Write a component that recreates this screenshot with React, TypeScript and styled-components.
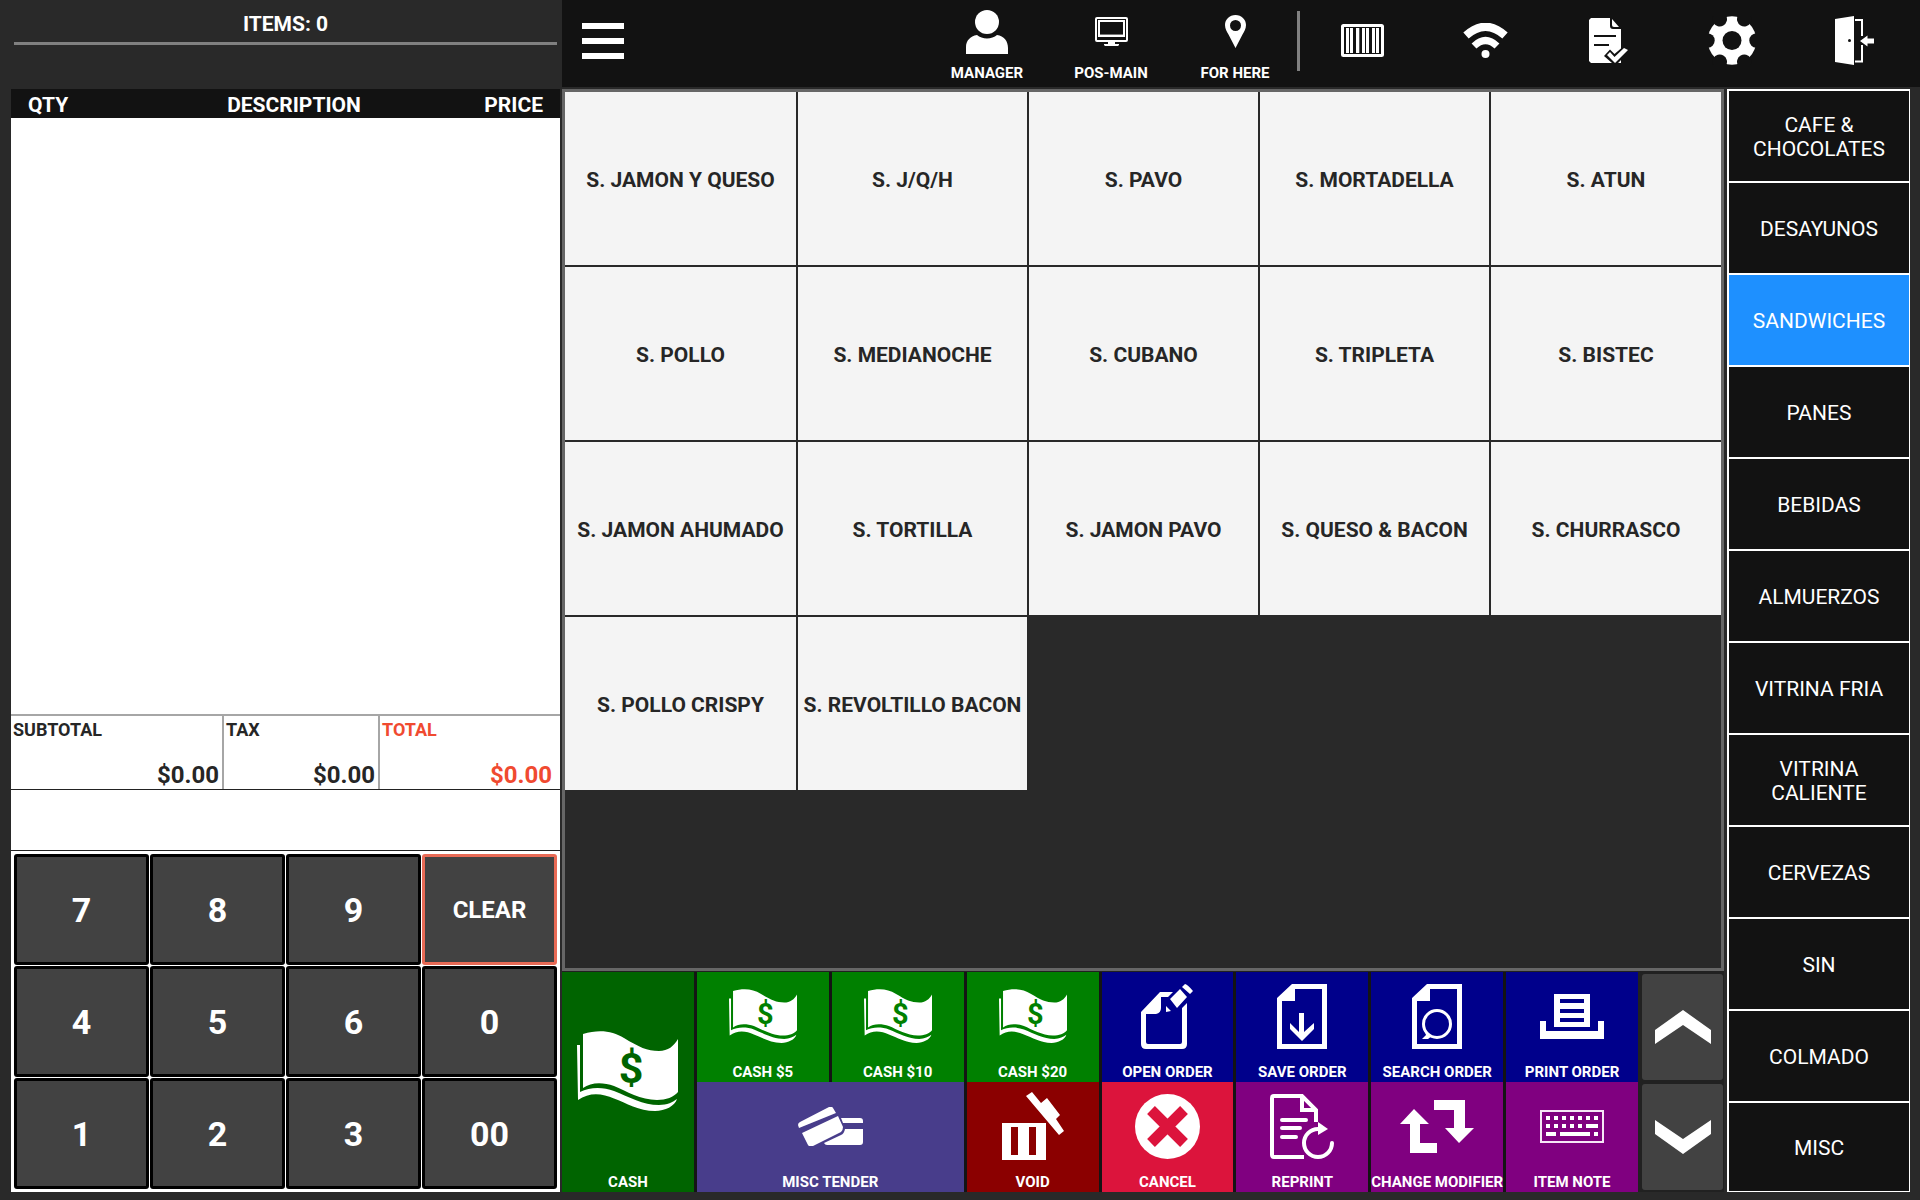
import React from "react";
import styled, { createGlobalStyle } from "styled-components";

const GlobalStyle = createGlobalStyle`
  *, *::before, *::after { box-sizing: border-box; }
  html, body { margin: 0; padding: 0; background: #292929; }
  body, button { font-family: Roboto, "Liberation Sans", sans-serif; }
  button { margin: 0; padding: 0; border: 0; color: inherit; cursor: pointer; }
  svg { display: block; flex: none; }
`;

const Screen = styled.div`
  display: grid;
  grid-template-columns: minmax(0, 562fr) minmax(0, 1358fr);
  min-height: 100vh;
  background: #292929;
  color: #fff;
`;

/* ---------- order panel ---------- */

const OrderPanel = styled.aside`
  display: flex;
  flex-direction: column;
  padding: 0 2px 8px 11px;
`;

const OrderHeader = styled.header`
  height: 89px;
  padding: 0 3px;
`;

const ItemCount = styled.h1`
  margin: 0;
  padding-top: 6px;
  height: 45px;
  border-bottom: 3px solid #808080;
  font-size: 21px;
  line-height: 36px;
  font-weight: 700;
  text-align: center;
`;

const Receipt = styled.section`
  flex: 1;
  display: flex;
  flex-direction: column;
  background: #fff;
  color: #262626;
`;

const ReceiptBody = styled.div`
  flex: 1;
`;

const ReceiptTable = styled.table`
  width: 100%;
  table-layout: fixed;
  border-collapse: collapse;
  background: #121212;
  color: #fff;
`;

const HeadCell = styled.th<{ $align: string; $width?: string }>`
  width: ${(p) => p.$width ?? "auto"};
  height: 29px;
  padding: 3px 17px 0;
  font-size: 21px;
  line-height: 26px;
  font-weight: 700;
  text-align: ${(p) => p.$align};
`;

const Totals = styled.dl`
  display: grid;
  grid-template-columns: 213fr 156fr 180fr;
  margin: 0;
  border-top: 2px solid #a6a6a6;
`;

const TotalBox = styled.div<{ $grand?: boolean }>`
  display: flex;
  flex-direction: column;
  justify-content: space-between;
  height: 73px;
  padding: 2px ${(p) => (p.$grand ? 8 : 3)}px 0 2px;
  border-right: ${(p) => (p.$grand ? "0" : "2px solid #a6a6a6")};
  color: ${(p) => (p.$grand ? "#f04a30" : "inherit")};
`;

const TotalLabel = styled.dt`
  font-size: 18px;
  line-height: 24px;
  font-weight: 700;
`;

const TotalValue = styled.dd`
  margin: 0;
  font-size: 24px;
  line-height: 28px;
  font-weight: 700;
  text-align: right;
`;

const Entry = styled.output`
  display: block;
  height: 62px;
  border-top: 1px solid #222;
  border-bottom: 1px solid #222;
`;

const Keypad = styled.div`
  display: grid;
  grid-template-columns: repeat(4, 1fr);
  grid-auto-rows: 111px;
  gap: 1px;
  padding: 3px;
`;

const Key = styled.button<{ $clear?: boolean }>`
  border: 3px solid ${(p) => (p.$clear ? "#e86a55" : "#000")};
  border-radius: 3px;
  background: #424242;
  color: #fff;
  font-size: ${(p) => (p.$clear ? 24 : 34)}px;
  font-weight: 700;
`;

/* ---------- workspace ---------- */

const Workspace = styled.div`
  display: flex;
  flex-direction: column;
  gap: 2px;
  padding-bottom: 8px;
`;

const TopBar = styled.header`
  display: flex;
  align-items: stretch;
  height: 87px;
  padding-right: 4px;
  background: #121212;
`;

const MenuButton = styled.button`
  width: 82px;
  display: flex;
  align-items: center;
  justify-content: center;
  background: transparent;
  padding-bottom: 5px;
`;

const TopGroup = styled.div`
  display: flex;
  margin-left: auto;
`;

const StatusButton = styled.button`
  width: 124px;
  display: flex;
  flex-direction: column;
  align-items: center;
  background: transparent;
`;

const StatusIcon = styled.span`
  height: 63px;
  display: flex;
  align-items: center;
`;

const SmallLabel = styled.span`
  font-size: 15px;
  line-height: 20px;
  font-weight: 700;
  white-space: nowrap;
`;

const Divider = styled.span`
  width: 3px;
  height: 60px;
  margin: 11px 1px 0 0;
  background: #808080;
`;

const ToolButton = styled.button`
  width: 123px;
  display: flex;
  align-items: center;
  justify-content: center;
  padding-bottom: 6px;
  background: transparent;
`;

const Columns = styled.div`
  flex: 1;
  display: grid;
  grid-template-columns: minmax(0, 1162fr) minmax(0, 183fr);
  gap: 3px;
  padding-right: 10px;
`;

const Center = styled.main`
  display: flex;
  flex-direction: column;
  gap: 1px;
  background: #212121;
`;

const ItemGrid = styled.section`
  flex: 1;
  display: grid;
  grid-template-columns: 231fr 229fr 229fr 229fr 230fr;
  grid-template-rows: repeat(5, 173fr) 1fr;
  gap: 2px;
  border: 3px solid #666;
  background: #292929;
`;

const ItemButton = styled.button`
  padding-top: 2px;
  background: #f4f4f4;
  color: #262626;
  font-size: 21px;
  line-height: 24px;
  font-weight: 700;
  white-space: nowrap;
`;

const Footer = styled.footer`
  display: flex;
  gap: 4px;
  padding-right: 1px;
`;

const Actions = styled.div`
  flex: 1;
  display: grid;
  grid-template-columns: repeat(8, minmax(0, 1fr));
  grid-auto-rows: 110px;
  column-gap: 3px;
  background: #141414;
`;

const ActionButton = styled.button<{ $bg: string; $cols?: number; $rows?: number }>`
  grid-column: span ${(p) => p.$cols ?? 1};
  grid-row: span ${(p) => p.$rows ?? 1};
  display: flex;
  flex-direction: column;
  align-items: center;
  background: ${(p) => p.$bg};
`;

const ActionIcon = styled.span`
  flex: 1;
  display: flex;
  align-items: center;
  padding-bottom: 2px;
`;

const Pager = styled.nav`
  width: 81px;
  display: grid;
  grid-template-rows: 1fr 1fr;
  gap: 4px;
  padding: 2px 0;
`;

const PageButton = styled.button`
  display: flex;
  align-items: center;
  justify-content: center;
  border-radius: 3px;
  background: #424242;
`;

const Categories = styled.nav`
  display: grid;
  grid-template-rows: repeat(11, 90fr) 88fr;
  gap: 2px;
  border: solid #fff;
  border-width: 2px 1px 1px 2px;
  background: #fff;
`;

const CategoryButton = styled.button<{ $active: boolean }>`
  padding: 2px 16px 0;
  background: ${(p) => (p.$active ? "#1e90ff" : "#121212")};
  color: #fff;
  font-size: 21px;
  line-height: 24px;
`;

/* ---------- icons ---------- */

type BoxProps = { w: number; h: number; scale?: number; children: React.ReactNode };

const Glyph = ({ w, h, scale = 1, children }: BoxProps) => (
  <svg width={Math.round(w * scale)} height={Math.round(h * scale)} viewBox={`0 0 ${w} ${h}`} fill="#fff" aria-hidden="true">
    {children}
  </svg>
);

const MenuIcon = () => (
  <Glyph w={42} h={36}><path d="M0 0h42v6H0zM0 15h42v6H0zM0 30h42v6H0z" /></Glyph>
);

const UserIcon = () => (
  <Glyph w={42} h={44}>
    <circle cx="21" cy="12" r="12" />
    <path d="M0 44V37C0 31 4 26 11 25C16 29.500 26 29.500 31 25C38 26 42 31 42 38V44Z" />
  </Glyph>
);

const MonitorIcon = () => (
  <Glyph w={33} h={29}>
    <rect x="1" y="1" width="31" height="23" rx="1" fill="none" stroke="#fff" strokeWidth="2" />
    <rect x="4" y="4" width="25" height="15" fill="none" stroke="#fff" strokeWidth="2" />
    <path d="M5 17h23v1H5z" fill="#777" />
    <path d="M13 25h7v2h4v1l-1 1H10l-1-1v-1h4z" />
  </Glyph>
);

const PinIcon = () => (
  <Glyph w={21} h={33}>
    <path fillRule="evenodd" d="M10.500 0C4.500 0 0 4.500 0 10C0 14 2 17 3.500 19.500L10.500 33L17.500 19.500C19 17 21 14 21 10C21 4.500 16.500 0 10.500 0ZM10.500 5a5.500 5.500 0 1 1 0 11a5.500 5.500 0 0 1 0-11Z" />
  </Glyph>
);

const BarcodeIcon = () => (
  <Glyph w={43} h={33}>
    <rect x="1.500" y="1.500" width="40" height="30" rx="1" fill="none" stroke="#fff" strokeWidth="3" />
    <path d="M5 4h3v25H5zM9 4h3v25H9zM15 4h3v25h-3zM21 4h3v25h-3zM25 4h3v25h-3zM31 4h3v25h-3zM35 4h3v25h-3z" />
    <path d="M18 4h1v25h-1z" fill="#555" />
  </Glyph>
);

const WifiIcon = () => (
  <Glyph w={45} h={35}>
    <g fill="none" stroke="#fff">
      <path d="M3 12.500Q22.500 -5 42 12.500" strokeWidth="8" />
      <path d="M11 23Q22.500 12 34 23" strokeWidth="7" />
    </g>
    <circle cx="22.500" cy="31" r="4" />
  </Glyph>
);

const ReportIcon = () => (
  <Glyph w={39} h={45}>
    <path d="M2 0H21V8Q21 11 24 11H32V45H2L0 43V2Z" />
    <path d="M23 1L30 9H25Q23 9 23 7Z" />
    <path d="M5 17h22v2H5zM5 26h15v2H5z" fill="#121212" />
    <path d="M15 38L21 31.500L25.500 36L36 27L42 32L27 47L23 45Z" fill="#121212" />
    <path d="M18 37L21 34L25.500 39L35 30L39 32L26 45Z" />
  </Glyph>
);

const GearIcon = () => (
  <Glyph w={48} h={49}>
    <circle cx="24" cy="24.500" r="24.200" />
    <g fill="#121212">
      {[0, 60, 120, 180, 240, 300].map((a) => (
        <circle key={a} cx="48.600" cy="24.500" r="7.300" transform={`rotate(${a} 24 24.500)`} />
      ))}
      <circle cx="24" cy="24.500" r="9.500" />
    </g>
  </Glyph>
);

const DoorIcon = () => (
  <Glyph w={39} h={49}>
    <path d="M0 3L19 0V49L0 46Z" />
    <circle cx="14.500" cy="24.500" r="1.500" fill="#121212" />
    <path d="M20 4H27V20M20 45.500H27V29" fill="none" stroke="#fff" strokeWidth="2" />
    <path d="M25 25L32.500 19.500V22.500H39V27.500H32.500V30.500Z" />
  </Glyph>
);

const BillIcon = ({ scale = 1, ink }: { scale?: number; ink: string }) => (
  <Glyph w={101} h={80} scale={scale}>
    <path d="M6 3C22 -2 36 0 47 7C62 16 70 20 82 20C91 20 97 15 101 8V61C97 66 89 69 80 69C64 69 49 60 37 55C26 51 14 51 6 57Z" />
    <path d="M0 14H3V61C13 56 26 56 37 60C52 66 66 74 82 74C90 74 96 71 100 68C98 75 88 80 78 80C62 80 49 72 37 67.500C25 62 12 61 1 69Z" />
    <text x="54" y="52" fill={ink} fontSize="43" fontWeight="700" textAnchor="middle">$</text>
  </Glyph>
);

const CardsIcon = () => (
  <Glyph w={65} h={39}>
    <path d="M1 21L0 18Q0 16 2 15L31 0Q34-1 35 1L38 6ZM4 26L40 9L45 20Q45 23 43 25L15 39Q11 40 10 38Z" />
    <path d="M43 11H62Q65 11 65 14V16H45ZM47 22H65V35Q65 38 62 38H29Q27 38 26 36L43 28Q46 27 47 22Z" />
  </Glyph>
);

const TrashIcon = () => (
  <Glyph w={62} h={68}>
    <path fillRule="evenodd" d="M0 31H44V68H0ZM9 35V63H16V35ZM27 35V63H34V35Z" />
    <path d="M24 4L30 0L39 11L45 6L58 23L54 27L62 39L57 43Z" />
  </Glyph>
);

const OpenIcon = () => (
  <Glyph w={52} h={65}>
    <path d="M32 8H19L0 28V60Q0 65 5 65H41Q46 65 46 60V19L41 24V58Q41 60 39 60H7Q5 60 5 58V30H15Q20 29 20 24V13H27Z" />
    <path d="M39 5L46 13L36 24L29 15ZM44 0Q46 0 52 7L49 10L41 3ZM25 22L30 27L25 28Z" />
  </Glyph>
);

const SheetPath = () => <path fillRule="evenodd" d="M0 14L15 0H50V65H0ZM5 17V60H45V5H18V17Z" />;

const SaveIcon = () => (
  <Glyph w={50} h={65}>
    <SheetPath />
    <path d="M22 29H27V48L37 39V45L25 57L13 45V39L22 48Z" />
  </Glyph>
);

const SearchIcon = () => (
  <Glyph w={50} h={65}>
    <SheetPath />
    <circle cx="25" cy="40" r="13.500" fill="none" stroke="#fff" strokeWidth="3" />
    <path d="M13 48L14 51L10 55H16L20 52Z" />
  </Glyph>
);

const PrintIcon = () => (
  <Glyph w={64} h={45}>
    <path fillRule="evenodd" d="M14 0H50V33H14ZM20 5V9H44V5ZM20 15V19H44V15ZM20 24V28H44V24Z" />
    <path d="M0 27H6V37H58V27H64V45H0Z" />
  </Glyph>
);

const CancelIcon = () => (
  <Glyph w={65} h={65}>
    <circle cx="32.500" cy="32.500" r="32.500" />
    <path d="M16 16L49 49M49 16L16 49" stroke="#dc143c" strokeWidth="11" />
  </Glyph>
);

const ReprintIcon = () => (
  <Glyph w={64} h={65}>
    <path d="M34 63H4Q2 63 2 61V4Q2 2 4 2H32L46 16V28M32 2V16H46" fill="none" stroke="#fff" strokeWidth="4" />
    <path d="M12 26H36M12 34H30M12 43H26M48 35A14 14 0 1 0 62 49" fill="none" stroke="#fff" strokeWidth="4" strokeLinecap="round" />
    <path d="M48 28L58 35L48 41Z" />
  </Glyph>
);

const SwapIcon = () => (
  <Glyph w={74} h={53}>
    <path d="M14 9L29 24H20V43H37V53H10V24H0ZM34 0H65V28H74L59 43L45 28H54V10H34Z" />
  </Glyph>
);

const KeyboardIcon = () => (
  <Glyph w={64} h={33}>
    <rect x="1" y="1" width="62" height="31" fill="none" stroke="#f6e6f6" strokeWidth="2" />
    {[6, 14, 22, 30, 38, 46, 54].map((x) => (
      <rect key={x} x={x} y="6" width="4" height="4" />
    ))}
    {[6, 14, 22, 30, 38].map((x) => (
      <rect key={x} x={x} y="14" width="4" height="4" />
    ))}
    <path d="M46 14h12v4H46zM6 22h10v4H6zM20 22h30v4H20zM54 22h4v4h-4z" />
  </Glyph>
);

const UpIcon = () => (
  <Glyph w={56} h={34}><path d="M0 20L28 0L56 20V34L28 15L0 34Z" /></Glyph>
);

const DownIcon = () => (
  <Glyph w={56} h={34}><path d="M0 14L28 34L56 14V0L28 19L0 0Z" /></Glyph>
);

/* ---------- data ---------- */

const items = [
  "S. JAMON Y QUESO", "S. J/Q/H", "S. PAVO", "S. MORTADELLA", "S. ATUN",
  "S. POLLO", "S. MEDIANOCHE", "S. CUBANO", "S. TRIPLETA", "S. BISTEC",
  "S. JAMON AHUMADO", "S. TORTILLA", "S. JAMON PAVO", "S. QUESO & BACON", "S. CHURRASCO",
  "S. POLLO CRISPY", "S. REVOLTILLO BACON",
];

const categories = [
  "CAFE & CHOCOLATES", "DESAYUNOS", "SANDWICHES", "PANES", "BEBIDAS", "ALMUERZOS",
  "VITRINA FRIA", "VITRINA CALIENTE", "CERVEZAS", "SIN", "COLMADO", "MISC",
];

const keys = ["7", "8", "9", "CLEAR", "4", "5", "6", "0", "1", "2", "3", "00"];

const statuses = [
  { label: "MANAGER", icon: <UserIcon /> },
  { label: "POS-MAIN", icon: <MonitorIcon /> },
  { label: "FOR HERE", icon: <PinIcon /> },
];

const tools = [
  { label: "Barcode", icon: <BarcodeIcon /> },
  { label: "Network", icon: <WifiIcon /> },
  { label: "Orders", icon: <ReportIcon /> },
  { label: "Settings", icon: <GearIcon /> },
  { label: "Exit", icon: <DoorIcon /> },
];

const GREEN = "#008000";
const BLUE = "#00008b";
const PURPLE = "#800080";
const smallBill = <BillIcon scale={0.67} ink={GREEN} />;

const actions = [
  { label: "CASH", bg: "#006400", rows: 2, icon: <BillIcon ink="#006400" /> },
  { label: "CASH $5", bg: GREEN, icon: smallBill },
  { label: "CASH $10", bg: GREEN, icon: smallBill },
  { label: "CASH $20", bg: GREEN, icon: smallBill },
  { label: "OPEN ORDER", bg: BLUE, icon: <OpenIcon /> },
  { label: "SAVE ORDER", bg: BLUE, icon: <SaveIcon /> },
  { label: "SEARCH ORDER", bg: BLUE, icon: <SearchIcon /> },
  { label: "PRINT ORDER", bg: BLUE, icon: <PrintIcon /> },
  { label: "MISC TENDER", bg: "#483d8b", cols: 2, icon: <CardsIcon /> },
  { label: "VOID", bg: "#8b0000", icon: <TrashIcon /> },
  { label: "CANCEL", bg: "#dc143c", icon: <CancelIcon /> },
  { label: "REPRINT", bg: PURPLE, icon: <ReprintIcon /> },
  { label: "CHANGE MODIFIER", bg: PURPLE, icon: <SwapIcon /> },
  { label: "ITEM NOTE", bg: PURPLE, icon: <KeyboardIcon /> },
];

export default function App() {
  const [active, setActive] = React.useState("SANDWICHES");
  return (
    <>
      <GlobalStyle />
      <Screen>
        <OrderPanel>
          <OrderHeader>
            <ItemCount>ITEMS: 0</ItemCount>
          </OrderHeader>
          <Receipt>
            <ReceiptBody>
              <ReceiptTable>
                <thead>
                  <tr>
                    <HeadCell scope="col" $align="left" $width="112px">QTY</HeadCell>
                    <HeadCell scope="col" $align="center">DESCRIPTION</HeadCell>
                    <HeadCell scope="col" $align="right" $width="95px">PRICE</HeadCell>
                  </tr>
                </thead>
              </ReceiptTable>
            </ReceiptBody>
            <Totals>
              <TotalBox>
                <TotalLabel>SUBTOTAL</TotalLabel>
                <TotalValue>$0.00</TotalValue>
              </TotalBox>
              <TotalBox>
                <TotalLabel>TAX</TotalLabel>
                <TotalValue>$0.00</TotalValue>
              </TotalBox>
              <TotalBox $grand>
                <TotalLabel>TOTAL</TotalLabel>
                <TotalValue>$0.00</TotalValue>
              </TotalBox>
            </Totals>
            <Entry aria-label="Entry" />
            <Keypad>
              {keys.map((k) => (
                <Key key={k} type="button" $clear={k === "CLEAR"}>{k}</Key>
              ))}
            </Keypad>
          </Receipt>
        </OrderPanel>

        <Workspace>
          <TopBar>
            <MenuButton type="button" aria-label="Menu"><MenuIcon /></MenuButton>
            <TopGroup>
              {statuses.map((s) => (
                <StatusButton key={s.label} type="button">
                  <StatusIcon>{s.icon}</StatusIcon>
                  <SmallLabel>{s.label}</SmallLabel>
                </StatusButton>
              ))}
              <Divider />
              {tools.map((t) => (
                <ToolButton key={t.label} type="button" aria-label={t.label}>{t.icon}</ToolButton>
              ))}
            </TopGroup>
          </TopBar>

          <Columns>
            <Center>
              <ItemGrid>
                {items.map((name) => (
                  <ItemButton key={name} type="button">{name}</ItemButton>
                ))}
              </ItemGrid>
              <Footer>
                <Actions>
                  {actions.map((a) => (
                    <ActionButton key={a.label} type="button" $bg={a.bg} $cols={a.cols} $rows={a.rows}>
                      <ActionIcon>{a.icon}</ActionIcon>
                      <SmallLabel>{a.label}</SmallLabel>
                    </ActionButton>
                  ))}
                </Actions>
                <Pager aria-label="Pages">
                  <PageButton type="button" aria-label="Previous page"><UpIcon /></PageButton>
                  <PageButton type="button" aria-label="Next page"><DownIcon /></PageButton>
                </Pager>
              </Footer>
            </Center>
            <Categories aria-label="Categories">
              {categories.map((c) => (
                <CategoryButton key={c} type="button" $active={c === active} onClick={() => setActive(c)}>
                  {c}
                </CategoryButton>
              ))}
            </Categories>
          </Columns>
        </Workspace>
      </Screen>
    </>
  );
}
